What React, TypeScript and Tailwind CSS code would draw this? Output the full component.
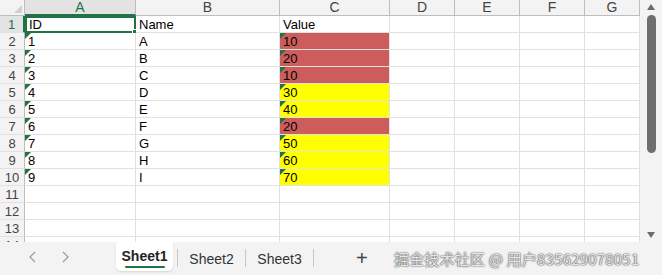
import React from "react";

const cols = [
  { name: "A", w: 111 },
  { name: "B", w: 144 },
  { name: "C", w: 110 },
  { name: "D", w: 65 },
  { name: "E", w: 65 },
  { name: "F", w: 65 },
  { name: "G", w: 55 },
];

const data: [string, string, string][] = [
  ["1", "A", "10"],
  ["2", "B", "20"],
  ["3", "C", "10"],
  ["4", "D", "30"],
  ["5", "E", "40"],
  ["6", "F", "20"],
  ["7", "G", "50"],
  ["8", "H", "60"],
  ["9", "I", "70"],
];

function Flag() {
  return (
    <span className="absolute left-0 top-0 h-0 w-0 border-t-[6px] border-r-[6px] border-t-[#217346] border-r-transparent" />
  );
}

function Cell({
  text,
  flag,
  fill,
}: {
  text?: string;
  flag?: boolean;
  fill?: string;
}) {
  return (
    <div
      className={`relative h-[17px] border-b border-r border-[#e1e1e1] pl-[3px] text-[13px] leading-[17px] text-black ${fill ?? "bg-white"}`}
    >
      {flag && <Flag />}
      {text}
    </div>
  );
}

export default function App() {
  const rows = Array.from({ length: 14 }, (_, i) => i + 1);

  return (
    <div className="h-[275px] w-[662px] overflow-hidden bg-white font-['Liberation_Sans',Arial,sans-serif]">
      <div className="flex h-[242px]">
        <div className="w-[640px] overflow-hidden">
          {/* column headers */}
          <div className="flex h-[16px] bg-[#f3f3f3]">
            <div className="relative w-[25px] border-r border-b border-[#bdbdbd]">
              <span className="absolute bottom-[2px] right-[2px] h-0 w-0 border-b-[8px] border-l-[8px] border-b-[#d0d0d0] border-l-transparent" />
            </div>
            {cols.map((c, i) => (
              <div
                key={c.name}
                style={{ width: c.w }}
                className={`text-center text-[14px] leading-[15px] ${
                  i === 0
                    ? "border-b-2 border-r border-b-[#217346] border-r-[#bdbdbd] bg-[#e3e3e3] text-[#217346]"
                    : "border-b border-r border-[#bdbdbd] text-[#444]"
                }`}
              >
                {c.name}
              </div>
            ))}
          </div>

          {rows.map((r) => {
            const d = data[r - 2];
            const isRed = d && ["10", "20"].includes(d[2]);
            return (
              <div key={r} className="flex">
                <div
                  className={`h-[17px] w-[25px] border-b border-r text-center text-[13px] leading-[17px] ${
                    r === 1
                      ? "border-b-[#e1e1e1] border-r-2 border-r-[#217346] bg-[#e3e3e3] text-[#217346]"
                      : "border-[#bdbdbd] border-b-[#e1e1e1] bg-[#f3f3f3] text-[#444]"
                  }`}
                >
                  {r}
                </div>
                {r === 1 ? (
                  <>
                    <div className="relative h-[17px] w-[111px] border-2 border-[#217346] pl-[2px] text-[13px] leading-[13px] text-black">
                      ID
                      <span className="absolute -bottom-[4px] -right-[4px] h-[6px] w-[6px] border border-white bg-[#217346]" />
                    </div>
                    <div className="w-[144px]">
                      <Cell text="Name" />
                    </div>
                    <div className="w-[110px]">
                      <Cell text="Value" />
                    </div>
                  </>
                ) : d ? (
                  <>
                    <div className="w-[111px]">
                      <Cell text={d[0]} flag />
                    </div>
                    <div className="w-[144px]">
                      <Cell text={d[1]} />
                    </div>
                    <div className="w-[110px]">
                      <Cell
                        text={d[2]}
                        flag
                        fill={isRed ? "bg-[#cd5c5c]" : "bg-[#ffff00]"}
                      />
                    </div>
                  </>
                ) : (
                  <>
                    <div className="w-[111px]">
                      <Cell />
                    </div>
                    <div className="w-[144px]">
                      <Cell />
                    </div>
                    <div className="w-[110px]">
                      <Cell />
                    </div>
                  </>
                )}
                {cols.slice(3).map((c) => (
                  <div key={c.name} style={{ width: c.w }}>
                    <Cell />
                  </div>
                ))}
              </div>
            );
          })}
        </div>

        {/* vertical scrollbar */}
        <div className="flex w-[22px] flex-col items-center bg-[#f3f3f3] pt-[4px]">
          <span className="h-0 w-0 border-x-[4px] border-b-[6px] border-x-transparent border-b-[#6b6b6b]" />
          <div className="mt-[5px] h-[138px] w-[9px] rounded-full bg-[#6e6e6e]" />
          <div className="flex-1" />
          <span className="mb-[4px] h-0 w-0 border-x-[4px] border-t-[6px] border-x-transparent border-t-[#6b6b6b]" />
        </div>
      </div>

      {/* sheet tabs */}
      <div className="flex h-[33px] items-start bg-[#f3f3f3] text-[13px]">
        <div className="flex w-[116px] items-center gap-[22px] pl-[28px] pt-[9px] text-[#9a9a9a]">
          <svg width="10" height="12" viewBox="0 0 10 12" fill="none" stroke="currentColor" strokeWidth="1.2">
            <path d="M7 1 L2 6 L7 11" />
          </svg>
          <svg width="10" height="12" viewBox="0 0 10 12" fill="none" stroke="currentColor" strokeWidth="1.2">
            <path d="M3 1 L8 6 L3 11" />
          </svg>
        </div>
        <div className="flex h-[29px] w-[57px] flex-col items-center rounded-b-[5px] bg-white pt-[6px] shadow-[0_1px_2px_rgba(0,0,0,0.12)]">
          <span className="text-[14px] leading-[16px] font-bold text-[#222]">Sheet1</span>
          <span className="mt-[2px] h-[2px] w-[40px] rounded bg-[#217346]" />
        </div>
        <div className="ml-[4px] mt-[7px] h-[18px] w-px bg-[#c8c8c8]" />
        <div className="w-[67px] pt-[9px] text-center text-[14px] leading-[16px] text-[#333]">Sheet2</div>
        <div className="mt-[7px] h-[18px] w-px bg-[#c8c8c8]" />
        <div className="w-[67px] pt-[9px] text-center text-[14px] leading-[16px] text-[#333]">Sheet3</div>
        <div className="mt-[7px] h-[18px] w-px bg-[#c8c8c8]" />
        <div className="w-[80px] pl-[42px] pt-[4px] text-[20px] font-light leading-[24px] text-[#444]">+</div>
        <div className="pt-[8px] text-[15px] leading-[18px] tracking-[0.2px] text-[#e6e6e6] font-['Noto_Sans_CJK_SC',sans-serif] [text-shadow:0_0_2px_#555,0_0_1px_#333]">
          掘金技术社区 @ 用户835629078051
        </div>
      </div>
    </div>
  );
}
